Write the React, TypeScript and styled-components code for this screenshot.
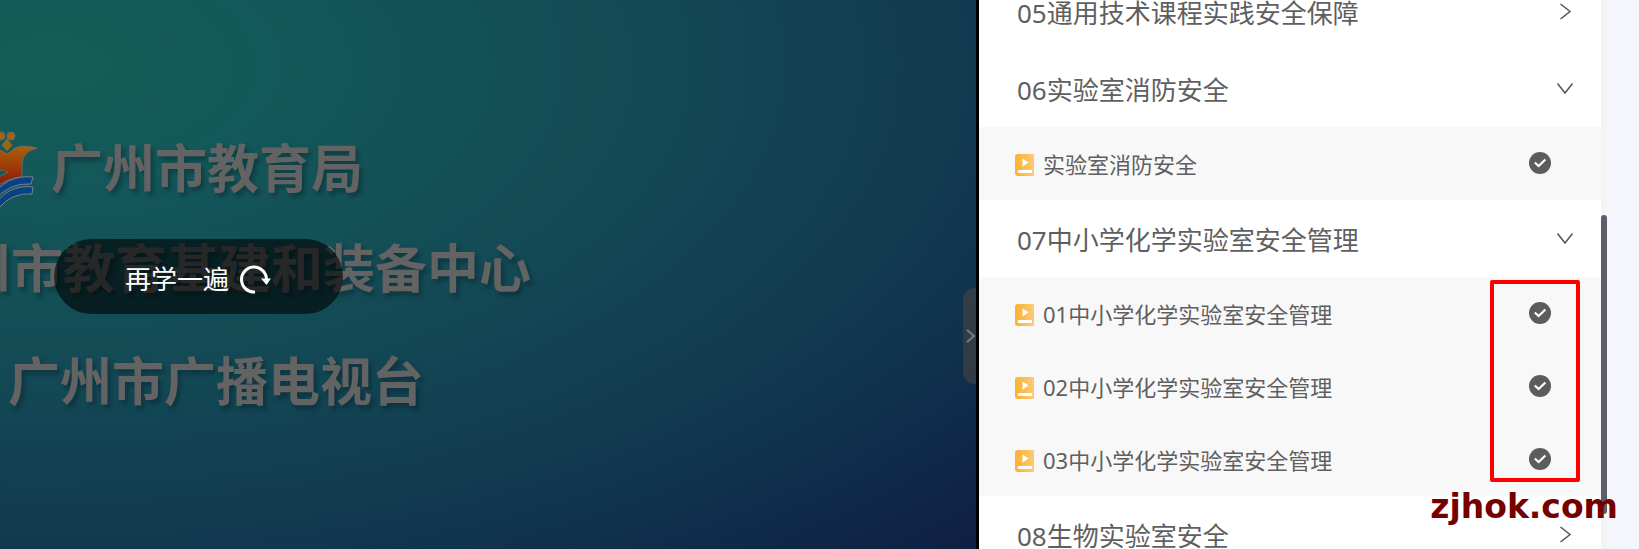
import React from 'react';
import styled, { createGlobalStyle } from 'styled-components';

const GlobalStyle = createGlobalStyle`
  * { box-sizing: border-box; }
  html, body, #root { height: 100%; }
  body {
    margin: 0;
    overflow: hidden;
    background: #f5f6fb;
    color: #5f5f61;
    font-family: "Noto Sans", "Noto Sans CJK SC", sans-serif;
  }
  button, a { font: inherit; color: inherit; }
  button { border: 0; background: none; padding: 0; cursor: pointer; }
`;

const Page = styled.div`
  display: grid;
  grid-template-columns: 979fr 628fr;
  grid-template-rows: 100%;
  height: 100vh;
  padding-right: 32px;
`;

const Player = styled.main`
  position: relative;
  min-width: 0;
  overflow: hidden;
  border-right: 3px solid #000;
  background: radial-gradient(
    ellipse 115% 105% at 5% 12%,
    #155c56 0%,
    #13585a 20%,
    #134a55 52%,
    #123b50 80%,
    #10304c 95%,
    #0f1f43 117%
  );
`;

const Credits = styled.div`
  display: flex;
  flex-direction: column;
  padding-top: 126px;
  color: #636363;
  font-family: "Noto Sans CJK SC", sans-serif;
  font-size: 52px;
  font-weight: 700;
  line-height: 80px;
  white-space: nowrap;
  text-shadow: 3px 4px 4px rgba(0, 20, 30, 0.35);
`;

const Credit = styled.p<{ $shift: number; $gap?: number }>`
  display: flex;
  align-items: center;
  margin: ${({ $gap = 0 }) => $gap}px 0 0 ${({ $shift }) => $shift}px;
`;

const Emblem = styled.svg`
  flex: none;
  width: 90px;
  height: 80px;
  margin-right: 11px;
  overflow: visible;
`;

const Replay = styled.button`
  position: absolute;
  top: 239px;
  left: 54px;
  display: flex;
  align-items: center;
  justify-content: center;
  gap: 11px;
  width: 289px;
  height: 75px;
  padding-top: 3px;
  border-radius: 38px;
  background: rgba(0, 0, 0, 0.6);
  color: #fff;
  font-size: 26px;
`;

const CollapseHandle = styled.button`
  position: absolute;
  top: 288px;
  right: -3px;
  display: grid;
  place-items: center;
  width: 16px;
  height: 96px;
  border-radius: 12px 0 0 12px;
  background: rgba(66, 66, 66, 0.7);
  color: #7a7d80;
`;

const Outline = styled.aside`
  display: flex;
  min-width: 0;
  overflow: hidden;
  background: #fff;
`;

const Chapters = styled.nav`
  flex: 1;
  min-width: 0;
  margin-top: -27px;
`;

const ChapterHeader = styled.button`
  display: flex;
  align-items: center;
  justify-content: space-between;
  width: 100%;
  height: 77px;
  padding: 0 27px 0 38px;
  font-size: 26px;
  font-weight: 400;
  white-space: nowrap;
`;

const Lessons = styled.ul`
  margin: 0;
  padding: 0;
  list-style: none;
  background: #f8f8f8;
`;

const LessonLink = styled.a`
  display: flex;
  align-items: center;
  gap: 9px;
  height: 73px;
  padding: 0 50px 2px 36px;
  font-size: 22px;
  text-decoration: none;
  white-space: nowrap;
`;

const BookIcon = styled.svg`
  flex: none;
  margin-top: 4px;
`;

const LessonTitle = styled.span`
  flex: 1;
`;

const ScrollTrack = styled.div`
  flex: none;
  width: 6px;
  padding-top: 215px;
  background: #f4f4f5;
`;

const ScrollThumb = styled.div`
  height: 299px;
  border-radius: 3px;
  background: #5d5d6d;
`;

const Highlight = styled.div`
  position: absolute;
  top: 280px;
  right: 59px;
  width: 90px;
  height: 202px;
  border: 4px solid #fe0000;
  border-radius: 2px;
  pointer-events: none;
`;

const Watermark = styled.div`
  position: absolute;
  top: 480px;
  right: 21px;
  color: #750000;
  font-family: "DejaVu Sans", sans-serif;
  font-size: 33px;
  font-weight: 700;
  line-height: 54px;
`;

const Chevron = ({ open }: { open: boolean }) => (
  <svg width="18" height="18" viewBox="0 0 18 18" fill="none" stroke="#555" strokeWidth="1.5" aria-hidden="true">
    {open ? <path d="M1.5 3.5 9 13l7.500-9.500" /> : <path d="M4.500 1 14 8.500l-9.500 7.500" />}
  </svg>
);

const LessonIcon = () => (
  <BookIcon width="19" height="22" viewBox="0 0 19 22" aria-hidden="true">
    <defs>
      <linearGradient id="book" x1="0" y1="0" x2="1" y2="0">
        <stop offset="0" stopColor="#fdb02d" />
        <stop offset="1" stopColor="#fbcb78" />
      </linearGradient>
    </defs>
    <path fill="url(#book)" d="M3 0h15a1 1 0 0 1 1 1v20a1 1 0 0 1-1 1H3a3 3 0 0 1-3-3V3a3 3 0 0 1 3-3Z" />
    <path fill="#fff" d="M7.500 4.500 13.500 8.500l-6 4ZM4 16h13v3H4a1.500 1.500 0 0 1 0-3Z" />
  </BookIcon>
);

const DoneIcon = () => (
  <svg width="22" height="22" viewBox="0 0 22 22" role="img" aria-label="已完成">
    <circle cx="11" cy="11" r="11" fill="#5b5c5e" />
    <path d="m5.800 10.500 3.800 3.500 6.800-6.500" fill="none" stroke="#fff" strokeWidth="2.200" />
  </svg>
);

const ReplayIcon = () => (
  <svg width="32" height="32" viewBox="0 0 32 32" aria-hidden="true">
    <path d="M15 30A12.500 12.500 0 1 1 26.500 17" fill="none" stroke="#fff" strokeWidth="3" />
    <path d="M21 16.500h10L26.500 23Z" fill="#fff" />
  </svg>
);

const EmblemDrawing = () => (
  <Emblem viewBox="0 0 90 80" aria-hidden="true">
    <defs>
      <linearGradient id="flower" x1="0" y1="0" x2="0" y2="1">
        <stop offset="0" stopColor="#a8640c" />
        <stop offset="0.500" stopColor="#a03c06" />
        <stop offset="1" stopColor="#8c0d12" />
      </linearGradient>
    </defs>
    <g stroke="#6a6a62" strokeWidth="1">
      <path fill="#a3640e" d="m57 13 5 6-5 6-5-6Z" />
      <circle cx="51" cy="10" r="4" fill="#a3640e" />
      <circle cx="61" cy="10" r="4" fill="#a3640e" />
      <path
        fill="url(#flower)"
        d="M15 22q24-8 33 4 2-3 5-1 4 5 8 0 7-8 26-3-15 4-15 16v13q-12 0-28 11-14-8-28-9V40q0-13-1-18Z"
      />
      <path fill="#14585a" d="M40 52q10-12 18-6-9 4-14 10Z" />
    </g>
    <g fill="#0b3f86" stroke="#75848d" strokeWidth="1">
      <path d="M40 73q16-25 43-22l-2 7q-22-2-38 18Z" />
      <path d="M44 80q14-22 39-19l-1 7q-20-2-34 15Z" />
    </g>
  </Emblem>
);

type Chapter = { title: string; lessons: string[] };

const chapters: Chapter[] = [
  { title: '05通用技术课程实践安全保障', lessons: [] },
  { title: '06实验室消防安全', lessons: ['实验室消防安全'] },
  {
    title: '07中小学化学实验室安全管理',
    lessons: ['01中小学化学实验室安全管理', '02中小学化学实验室安全管理', '03中小学化学实验室安全管理'],
  },
  { title: '08生物实验室安全', lessons: [] },
];

export default function App() {
  return (
    <>
      <GlobalStyle />
      <Page>
        <Player>
          <Credits>
            <Credit $shift={-50}>
              <EmblemDrawing />
              广州市教育局
            </Credit>
            <Credit $shift={-93} $gap={20}>广州市教育基建和装备中心</Credit>
            <Credit $shift={8} $gap={33}>广州市广播电视台</Credit>
          </Credits>
          <Replay type="button">
            再学一遍
            <ReplayIcon />
          </Replay>
          <CollapseHandle type="button" aria-label="收起目录">
            <svg width="10" height="16" viewBox="0 0 10 16" fill="none" stroke="currentColor" strokeWidth="2">
              <path d="m1 2 7 6-7 6" />
            </svg>
          </CollapseHandle>
        </Player>
        <Outline>
          <Chapters>
            {chapters.map(({ title, lessons }) => (
              <section key={title}>
                <ChapterHeader type="button" aria-expanded={lessons.length > 0}>
                  {title}
                  <Chevron open={lessons.length > 0} />
                </ChapterHeader>
                {lessons.length > 0 && (
                  <Lessons>
                    {lessons.map((lesson) => (
                      <li key={lesson}>
                        <LessonLink href="#">
                          <LessonIcon />
                          <LessonTitle>{lesson}</LessonTitle>
                          <DoneIcon />
                        </LessonLink>
                      </li>
                    ))}
                  </Lessons>
                )}
              </section>
            ))}
          </Chapters>
          <ScrollTrack>
            <ScrollThumb />
          </ScrollTrack>
        </Outline>
      </Page>
      <Highlight />
      <Watermark>zjhok.com</Watermark>
    </>
  );
}
